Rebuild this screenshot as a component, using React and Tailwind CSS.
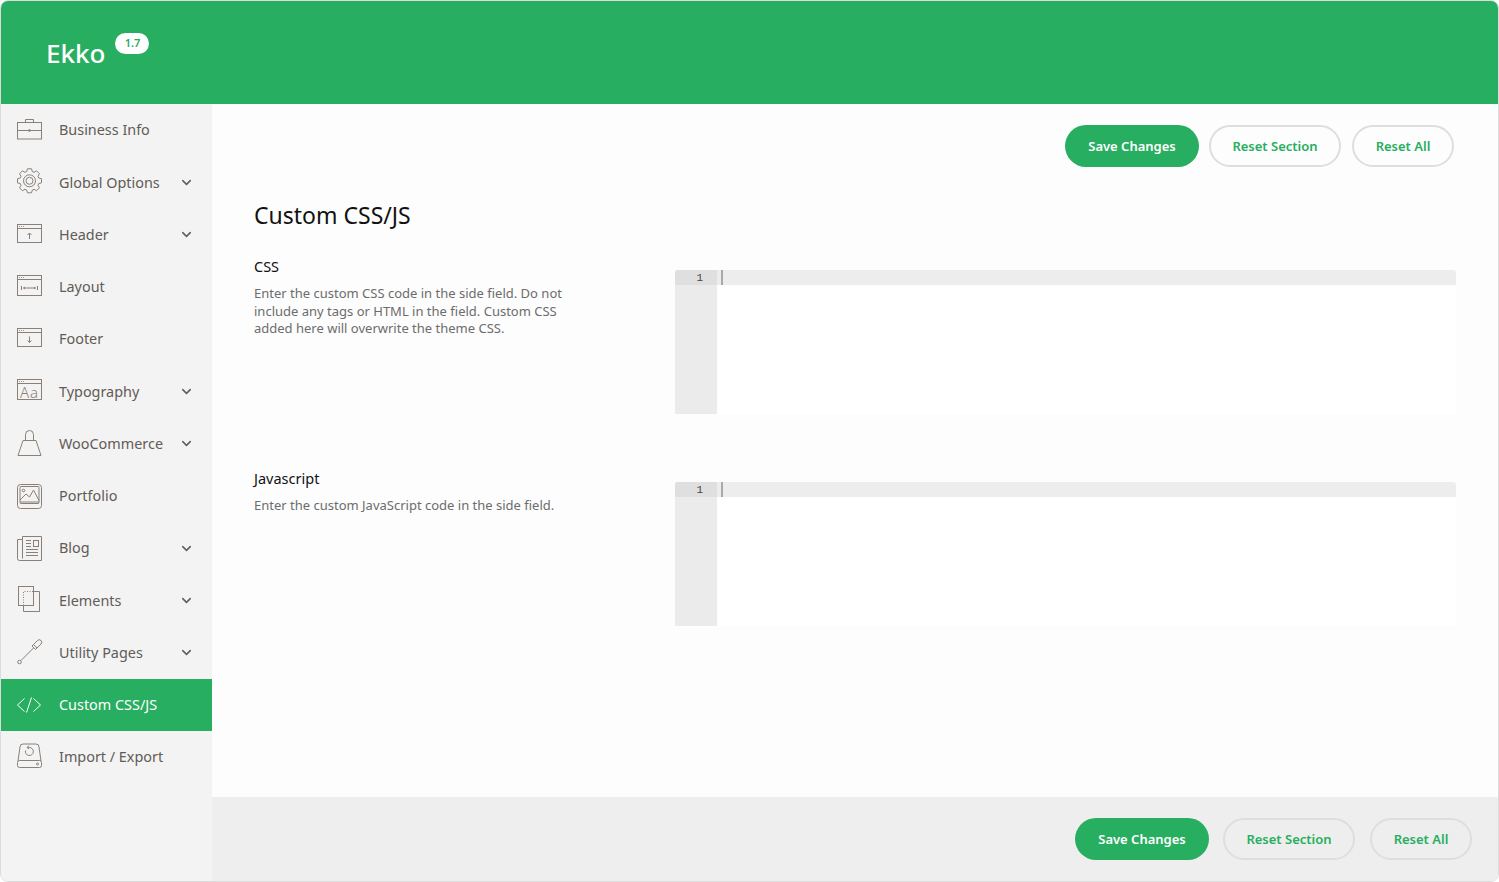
import React from 'react';
import { ChevronDown } from 'lucide-react';

const line = { fill: 'none', stroke: '#8a8078', strokeWidth: 1 };

// 8 tooth gear outline
const gearPath = () => {
  const pts = [];
  for (let i = 0; i < 8; i++) {
    const a = (i * Math.PI) / 4;
    [[-0.3, 9.6], [-0.17, 12.2], [0.17, 12.2], [0.3, 9.6]].forEach(([d, r]) => {
      pts.push(`${(14.5 + r * Math.sin(a + d)).toFixed(2)} ${(12.8 - r * Math.cos(a + d)).toFixed(2)}`);
    });
  }
  return `M${pts.join('L')}z`;
};

const Win = ({ y = 3.5, h = 18, children }) => (
  <svg width="28" height="28" viewBox="0 0 28 28" {...line}>
    <rect x="2.5" y={y} width="24" height={h} />
    <path d={`M2.5 ${y + 4}h24M4 ${y + 2}h.8M6 ${y + 2}h.8M8 ${y + 2}h.8`} />
    {children}
  </svg>
);

const icons = {
  business: (
    <svg width="28" height="28" viewBox="0 0 28 28" {...line}>
      <rect x="2.5" y="6.5" width="24" height="16.5" />
      <path d="M2.5 14.5h24M10.5 6.5V3.5h8v3" />
      <circle cx="14.5" cy="14.5" r="1" />
    </svg>
  ),
  gear: (
    <svg width="28" height="28" viewBox="0 0 28 28" {...line} strokeLinejoin="round">
      <path d={gearPath()} />
      <circle cx="14.5" cy="12.8" r="6" />
      <circle cx="14.5" cy="12.8" r="3.5" />
    </svg>
  ),
  header: <Win><path d="M14.5 18v-6M12.5 14l2-2 2 2" /></Win>,
  layout: <Win y={2.5} h={20}><path d="M6.5 13v4M22.5 13v4M8.5 15h12M10 14l-1.5 1 1.5 1M19 14l1.5 1-1.5 1" /></Win>,
  footer: <Win><path d="M14.5 11.5v6M12.5 15.5l2 2 2-2" /></Win>,
  type: (
    <Win y={2.5} h={20}>
      <text x="5" y="21" fontSize="15" fontWeight="300" letterSpacing="1" fill="#8a8078" stroke="none" fontFamily="'Noto Sans', sans-serif">
        Aa
      </text>
    </Win>
  ),
  bag: (
    <svg width="28" height="28" viewBox="0 0 28 28" {...line}>
      <path d="M8 10.5h13l5 15H3zM10.5 10.5V4.5a4 4 0 0 1 8 0v6" />
    </svg>
  ),
  portfolio: (
    <svg width="28" height="28" viewBox="0 0 28 28" {...line}>
      <rect x="2.5" y="2.5" width="24" height="24" rx="3" />
      <rect x="5" y="4.5" width="19" height="17" rx="1" />
      <path d="M5 18l6-6 3.5 3 4-7L24 18.5M5 20h19" />
      <circle cx="8.5" cy="8.5" r="1.3" />
    </svg>
  ),
  blog: (
    <svg width="28" height="28" viewBox="0 0 28 28" {...line}>
      <path d="M7.5 2.5h19v24h-22a2 2 0 0 1-2-2v-19h5zM7.5 5.5v19" />
      <path d="M11 6.5h5M11 9.5h5M11 12.5h5M11 15.5h12M11 18.5h12M11 21.5h12" />
      <rect x="18.5" y="6.5" width="5" height="6" />
    </svg>
  ),
  elements: (
    <svg width="28" height="28" viewBox="0 0 28 28" {...line}>
      <rect x="3.5" y="0.5" width="15" height="19" />
      <path d="M18.5 5.5h6v20h-16v-6" />
      <path d="M8.5 19.5v-14h10" strokeDasharray="1 1.5" />
    </svg>
  ),
  tool: (
    <svg width="28" height="28" viewBox="0 0 28 28" {...line}>
      <path d="M17 7l5.5-5.5a1.8 1.8 0 0 1 3.5 3.5l-5.5 5.5zM18.5 9l-12.5 12.5M18.5 5.5l3.5 3.5" />
      <circle cx="4.5" cy="23" r="1.8" />
    </svg>
  ),
  code: (
    <svg width="28" height="28" viewBox="0 0 28 28" fill="none" stroke="#fff" strokeWidth="1">
      <path d="M9.5 7.5L2.5 14l7 6.5M18.5 7.5l7 6.5-7 6.5M16.5 6.5l-5 15" />
    </svg>
  ),
  disk: (
    <svg width="28" height="28" viewBox="0 0 28 28" {...line}>
      <path d="M3 18L5 4a3 3 0 0 1 3-3h13a3 3 0 0 1 3 3l2 14" />
      <rect x="2.5" y="17.5" width="24" height="7" rx="2" />
      <circle cx="22.5" cy="21" r="1" />
      <path d="M10.5 7.5a4 4 0 1 0 4-3h-2M14 2.5l-2 2 2 1.5" />
    </svg>
  ),
};

const menu = [
  { label: 'Business Info', icon: 'business' },
  { label: 'Global Options', icon: 'gear', sub: true },
  { label: 'Header', icon: 'header', sub: true },
  { label: 'Layout', icon: 'layout' },
  { label: 'Footer', icon: 'footer' },
  { label: 'Typography', icon: 'type', sub: true },
  { label: 'WooCommerce', icon: 'bag', sub: true },
  { label: 'Portfolio', icon: 'portfolio' },
  { label: 'Blog', icon: 'blog', sub: true },
  { label: 'Elements', icon: 'elements', sub: true },
  { label: 'Utility Pages', icon: 'tool', sub: true },
  { label: 'Custom CSS/JS', icon: 'code', active: true },
  { label: 'Import / Export', icon: 'disk' },
];

const SideItem = ({ item }) => (
  <li
    className={`flex h-[52.25px] items-center pl-[14px] pr-[18px] text-[14.4px] ${
      item.active ? 'bg-[#27ae60] text-white' : 'text-[#625b56]'
    }`}
  >
    <span className="flex w-[44px] shrink-0">{icons[item.icon]}</span>
    <span className="flex-1">{item.label}</span>
    {item.sub && <ChevronDown size={15} strokeWidth={2.5} className="text-[#5f5f5f]" />}
  </li>
);

const Buttons = ({ gap }) => (
  <div className={`flex items-center font-semibold text-[13px] ${gap}`}>
    <button className="h-[42px] w-[134px] rounded-full bg-[#27ae60] pt-px text-white">Save Changes</button>
    <button className="h-[42px] w-[132px] rounded-full border-2 border-[#dedede] pt-px text-[#27ae60]">Reset Section</button>
    <button className="ml-px h-[42px] w-[102px] rounded-full border-2 border-[#dedede] pt-px text-[#27ae60]">Reset All</button>
  </div>
);

const Editor = () => (
  <div className="relative ml-[421px] flex h-[144px] w-[781px] overflow-hidden rounded-t-[3px] bg-white">
    <div className="w-[42px] bg-[#ebebeb]">
      <div className="h-[15px] bg-[#dfdfdf] pr-[14px] text-right font-['Liberation_Mono',monospace] text-[11px] leading-[16px] text-[#444]">
        1
      </div>
    </div>
    <div className="h-[15px] flex-1 bg-[#ededed] pl-[4px]">
      <div className="h-[15px] w-[2px] bg-[#a9a9a9]" />
    </div>
  </div>
);

const Field = ({ title, desc, className }) => (
  <div className={`relative ${className}`}>
    <div className="absolute left-0 top-[-14px] w-[320px]">
      <h3 className="text-[14.5px] leading-[20px] text-[#111]">{title}</h3>
      <p className="mt-[9px] text-[13px] leading-[17.5px] text-[#6c6c6c]">{desc}</p>
    </div>
    <Editor />
  </div>
);

export default function App() {
  return (
    <div className="flex h-[882px] w-[1499px] flex-col overflow-hidden rounded-lg border border-[#dcdcdc] bg-[#fdfdfd] font-['Noto_Sans','Open_Sans',sans-serif]">
      <header className="flex h-[103px] shrink-0 items-start bg-[#27ae60] pl-[45px] pt-[32px] text-white">
        <span className="text-[26px] font-medium leading-[40px]">Ekko</span>
        <span className="ml-[10px] flex h-[21px] w-[34px] items-center justify-center rounded-full bg-white text-[11px] font-semibold text-[#27ae60]">
          1.7
        </span>
      </header>
      <div className="flex min-h-0 flex-1">
        <ul className="w-[211px] shrink-0 bg-[#f3f3f3]">
          {menu.map((item) => (
            <SideItem key={item.label} item={item} />
          ))}
        </ul>
        <div className="flex min-w-0 flex-1 flex-col">
          <main className="flex-1 pl-[42px] pr-[44px] pt-[21px]">
            <div className="flex justify-end">
              <Buttons gap="gap-[10px]" />
            </div>
            <h2 className="mt-[30px] text-[23px] leading-[36px] text-[#111]">Custom CSS/JS</h2>
            <Field
              className="mt-[37px]"
              title="CSS"
              desc="Enter the custom CSS code in the side field. Do not include any tags or HTML in the field. Custom CSS added here will overwrite the theme CSS."
            />
            <Field
              className="mt-[68px]"
              title="Javascript"
              desc="Enter the custom JavaScript code in the side field."
            />
          </main>
          <footer className="flex h-[84px] shrink-0 items-center justify-end bg-[#eeeeee] pr-[26px]">
            <Buttons gap="gap-[14px]" />
          </footer>
        </div>
      </div>
    </div>
  );
}
